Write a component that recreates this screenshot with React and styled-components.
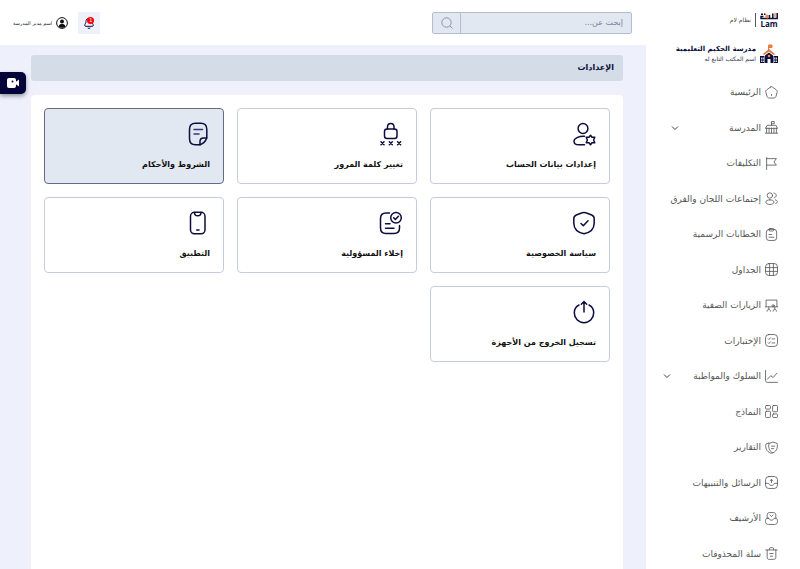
import React from "react";
import styled, { createGlobalStyle } from "styled-components";

const NAVY = "#0b0d3b";

const icons = {
  home: (
    <>
      <path d="M10.2 1.9 3 7.3C1.6 8.4 1.1 10 1.6 11.700l2.100 7.500c.6 2 1.900 3 3.900 3h8.800c2 0 3.300-1 3.900-3l2.100-7.500c.5-1.700 0-3.300-1.400-4.400l-7.200-5.400c-1.100-.8-2.500-.8-3.600 0Z" />
      <path d="M12 15.500v2" />
    </>
  ),
  school: (
    <>
      <path d="M12 8V1h5v4h-5M1 13l3-5h16l3 5ZM3 13v9M21 13v9M0 22.500h24M7.500 13v9M12 13v9M16.500 13v9" />
    </>
  ),
  flag: <path d="M3 1v22M3 3h18l-4.500 6L21 15H3" />,
  users: (
    <>
      <circle cx="9" cy="6.500" r="5" />
      <path d="M9 14.500c-4.500 0-7.500 1.700-7.500 4.200S4.500 23 9 23s7.500-1.800 7.500-4.300-3-4.200-7.500-4.200ZM16.500 2c2.600.2 4.200 2 4.200 4.400 0 2.300-1.500 4.100-3.700 4.400M19 14.500c2.400.5 3.800 1.700 3.800 3.300 0 1.500-1 2.700-3 3.400" />
    </>
  ),
  clipboard: (
    <>
      <rect x="2.500" y="2.500" width="19" height="20.500" rx="5" />
      <rect x="7.500" y="1" width="9" height="4.500" rx="2" />
      <path d="M7.500 12h5M7.500 17h9" />
    </>
  ),
  grid: (
    <>
      <rect x="1" y="1" width="22" height="22" rx="6" />
      <path d="M1 8.500h22M1 15.500h22M8.500 1v22M15.500 1v22" />
    </>
  ),
  visits: (
    <>
      <path d="M2 14V2h20v12M0 14.500h24" />
      <circle cx="15" cy="12.500" r="2" />
      <path d="M7 15v4M4 22.500c0-2 1-3.500 3-3.500s3 1.500 3 3.500M18 15v4M15 22.500c0-2 1-3.500 3-3.500s3 1.500 3 3.500" />
    </>
  ),
  tests: (
    <>
      <rect x="1" y="1" width="22" height="22" rx="6" />
      <path d="M13 9h5M13 16.500h5M6 8.800l1.300 1.300L10 7M6 16.300l1.300 1.300 2.700-3.100" />
    </>
  ),
  chart: <path d="M1 1v18c0 2.500 1 3.800 3.500 3.800H23M4.500 17l6-6.500 4.500 3.500 7-8" />,
  forms: (
    <>
      <rect x="1" y="1" width="9" height="6.500" rx="1.500" />
      <rect x="1" y="11.500" width="9" height="11.500" rx="1.500" />
      <rect x="14" y="1" width="9" height="11.500" rx="1.500" />
      <rect x="14" y="16.500" width="9" height="6.500" rx="1.500" />
    </>
  ),
  reports: (
    <>
      <path d="M7.500 4.500 14.500 2l8 2.500c1 5 .5 14-8 17.500C7 18.500 5.500 10.500 7.500 4.500Z" />
      <path d="M6.500 3.500 1.500 6c-1 6 1 13.500 9 16.500l3-.5M12 9.500h6M12 14h4" />
    </>
  ),
  messages: (
    <>
      <rect x="1" y="1" width="22" height="22" rx="6" />
      <path d="M1 13.500h4.500c1 0 1.600.5 2 1.300l.7 1.200c.5.900 1 1.200 2 1.200h3.600c1 0 1.500-.3 2-1.200l.7-1.200c.4-.8 1-1.300 2-1.300H23M9.500 8.500 12 6.500l2.500 2M12 7v5" />
    </>
  ),
  archive: (
    <>
      <path d="M4 12V6c0-3.300 1.500-5 4.500-5h7c3 0 4.500 1.700 4.500 5v6" />
      <path d="M6 11.500c-3.300 0-5 1.500-5 4.500v1.500C1 21 2.700 23 6.500 23h11c3.800 0 5.500-2 5.500-5.500V16c0-3-1.700-4.500-5-4.500-1.500 0-2 1-3 2.500-1.500 1.500-4.500 1.500-6 0-1-1.500-1.500-2.500-3-2.500ZM9 5.500l3 3 3-3" />
    </>
  ),
  trash: (
    <path d="M1.500 5.500h21M8 5V3.500C8 2 8.800 1.200 10.300 1.200h3.400c1.500 0 2.300.8 2.300 2.300V5M4 5.500V19c0 2.500 1.200 3.800 3.700 3.800h8.600c2.500 0 3.700-1.300 3.700-3.800V5.500M9 12h6M10 17h4" />
  ),
  account: (
    <>
      <circle cx="11" cy="6.500" r="4.900" />
      <path d="M12.500 14.300c-6-.2-10.500 2-10.500 4.900 0 2.300 2 3.600 5 3.600h5.500" />
      <path d="m18.500 13.300 1.500 2h2.800l-1.200 2.700 1.200 2.700H20l-1.500 2-1.500-2h-2.800l1.200-2.700-1.200-2.700H17Z" />
    </>
  ),
  password: (
    <>
      <rect x="5.500" y="7" width="12.500" height="9.500" rx="2.500" />
      <path d="M8.500 7V5c0-2.100 1.200-3.500 3.300-3.500S15 2.900 15 5v2" />
      <path d="m2 19.800 3 3m0-3-3 3M10.300 19.800l3 3m0-3-3 3M18.600 19.800l3 3m0-3-3 3" />
    </>
  ),
  terms: (
    <>
      <path d="M14 22.800H9.500c-4 0-6-2-6-6V7.300c0-4 2-6 6-6h5.300c4 0 6 2 6 6v8.500c-1 3.200-3.800 6-6.800 7Z" />
      <path d="M14 22.800v-3.300c0-2.300 1.200-3.500 3.500-3.500h3.200" />
      <path d="M8 7.500h8.500M8 12h5" stroke="#34357a" />
    </>
  ),
  privacy: (
    <>
      <path d="M10.200 1.800 4.300 4C2.700 4.600 1.800 6 1.800 7.800V12c0 5.500 4 9.500 10.200 10.800 6.200-1.300 10.200-5.300 10.200-10.800V7.800c0-1.800-.9-3.200-2.500-3.800l-5.900-2.200c-1.200-.5-2.400-.5-3.600 0Z" />
      <path d="m9 12.500 2.300 2.300 4.700-5" />
    </>
  ),
  disclaimer: (
    <>
      <path d="M10.500 2H7C3.500 2 1.500 4 1.500 7.500V17c0 3.500 2 5.500 5.500 5.500h8c3.500 0 5.500-2 5.500-5.500v-2.500" />
      <circle cx="17" cy="6.800" r="5.300" />
      <path d="m14.800 6.900 1.600 1.600 3-3.200M6.500 12.800h4.500M6.500 17.200h8.500" />
    </>
  ),
  phone: (
    <>
      <rect x="4.500" y="1.300" width="14.500" height="21.500" rx="4" />
      <path d="M8.500 1.500c0 2.300 1 3.300 3.200 3.300s3.300-1 3.300-3.300M10.700 19h2.300" />
    </>
  ),
  logout: (
    <path d="M7 5C4 6.500 2.300 9.300 2.300 12.800c0 5.500 4.200 9.900 9.700 9.900s9.700-4.400 9.700-9.900c0-3.500-1.700-6.300-4.700-7.800M12 12V1.800M9.300 4.300 12 1.500l2.700 2.800" />
  ),
};

const menu = [
  { icon: "home", label: "الرئيسية" },
  { icon: "school", label: "المدرسة", arrowInset: 14 },
  { icon: "flag", label: "التكليفات" },
  { icon: "users", label: "إجتماعات اللجان والفرق" },
  { icon: "clipboard", label: "الخطابات الرسمية" },
  { icon: "grid", label: "الجداول" },
  { icon: "visits", label: "الزيارات الصفية" },
  { icon: "tests", label: "الإختبارات" },
  { icon: "chart", label: "السلوك والمواظبة", arrowInset: 6 },
  { icon: "forms", label: "النماذج" },
  { icon: "reports", label: "التقارير" },
  { icon: "messages", label: "الرسائل والتنبيهات" },
  { icon: "archive", label: "الأرشيف" },
  { icon: "trash", label: "سلة المحذوفات" },
];

const settings = [
  { icon: "account", label: "إعدادات بيانات الحساب" },
  { icon: "password", label: "تغيير كلمة المرور" },
  { icon: "terms", label: "الشروط والأحكام", active: true },
  { icon: "privacy", label: "سياسة الخصوصية" },
  { icon: "disclaimer", label: "إخلاء المسؤولية" },
  { icon: "phone", label: "التطبيق" },
  { icon: "logout", label: "تسجيل الخروج من الأجهزة" },
];

const Icon = ({ name, size, weight }) => (
  <LineIcon viewBox="0 0 24 24" $size={size} strokeWidth={weight} aria-hidden="true">
    {icons[name]}
  </LineIcon>
);

const Sidebar = () => (
  <SidebarWrapper>
    <Brand>
      <svg width="18" height="16" viewBox="0 0 18 16" role="img" aria-label="Lam">
        <path d="M17.200 1v5.500h-4.400V1.500M12.800 6.500H9.500V3M9.500 6.500H1V4.500h2.500" fill="none" stroke={NAVY} strokeWidth="1.500" />
        <circle cx="7.200" cy="4.500" r="1.900" fill="#e98a55" />
        <path d="M14 1h2v4h-2z" fill="#e9b093" />
        <path d="M1 1.500h2V3H1zM4 1.500h1.500V3H4z" fill={NAVY} />
        <text x="9" y="15" textAnchor="middle" fontFamily="Open Sans, sans-serif" fontWeight="700" fontSize="8" fill={NAVY} direction="ltr">
          Lam
        </text>
      </svg>
      <BrandName>نظام لام</BrandName>
    </Brand>
    <School>
      <svg width="18" height="20" viewBox="0 0 18 20" aria-hidden="true">
        <path d="M8.500 6V1h3.500v2.500H9" fill="#f08a4b" stroke="#e07a3c" />
        <path d="M9 5 3.500 9.500v2L9 7.500l5.500 4v-2Z" fill="#e07a3c" />
        <path d="M9 8.500 5 11.500V19h8v-7.500ZM0 12h4.500v7H0zM13.500 12H18v7h-4.500z" fill={NAVY} />
        <circle cx="9" cy="12" r="1.300" fill="#f08a4b" />
        <path d="M7.500 15h3v4h-3zM1.200 13.500h1v2h-1zM2.800 13.500h1v2h-1zM1.200 16.500h1v1.500h-1zM2.800 16.500h1v1.500h-1zM14.200 13.500h1v2h-1zM15.800 13.500h1v2h-1zM14.200 16.500h1v1.500h-1zM15.800 16.500h1v1.500h-1z" fill="#fff" />
      </svg>
      <div>
        <SchoolName>مدرسة الحكيم التعليمية</SchoolName>
        <Office>اسم المكتب التابع له</Office>
      </div>
    </School>
    <Menu>
      {menu.map((item) => (
        <li key={item.icon}>
          <MenuLink href="#" $inset={item.arrowInset}>
            <Icon name={item.icon} size={13} weight={1.5} />
            <span>{item.label}</span>
            {item.arrowInset && (
              <Chevron viewBox="0 0 8 8" aria-hidden="true">
                <path d="m1 2.500 3 3 3-3" />
              </Chevron>
            )}
          </MenuLink>
        </li>
      ))}
    </Menu>
  </SidebarWrapper>
);

const Topbar = () => (
  <TopbarWrapper>
    <Search>
      <SearchInput type="text" placeholder="إبحث عن..." aria-label="إبحث عن" />
      <SearchButton type="button" aria-label="بحث">
        <svg width="12" height="12" viewBox="0 0 12 12" fill="none" stroke="#8d93a5" aria-hidden="true">
          <circle cx="5.500" cy="5.500" r="4.700" />
          <path d="m9 9 2.500 2.500" />
        </svg>
      </SearchButton>
    </Search>
    <UserArea>
      <BellButton type="button" aria-label="التنبيهات">
        <svg width="10" height="12" viewBox="0 0 10 12" fill="none" stroke={NAVY} aria-hidden="true">
          <path d="M5 1.200C3 1.200 2 2.700 2 4.500c0 2-1.300 2.700-1.300 3.800 0 .8.600 1 1.300 1h6c.7 0 1.300-.2 1.300-1C9.300 7.200 8 6.500 8 4.500 8 2.700 7 1.200 5 1.200ZM3.700 11c.7.5 1.900.5 2.600 0" />
        </svg>
        <Badge>1</Badge>
      </BellButton>
      <User type="button">
        <svg width="12" height="12" viewBox="0 0 12 12" aria-hidden="true">
          <circle cx="6" cy="6" r="5.400" fill="none" stroke="#111" />
          <circle cx="6" cy="4.500" r="2" fill="#111" />
          <path d="M2.500 9.500c.5-2 2-2.500 3.500-2.500s3 .5 3.500 2.500C8 11.300 4 11.300 2.500 9.500Z" fill="#111" />
        </svg>
        <span>اسم مدير المدرسة</span>
      </User>
    </UserArea>
  </TopbarWrapper>
);

const App = () => (
  <Page dir="rtl">
    <GlobalStyle />
    <Sidebar />
    <Main>
      <Topbar />
      <Content>
        <PageTitle>الإعدادات</PageTitle>
        <Panel>
          {settings.map((item) => (
            <Card key={item.icon} type="button" $active={item.active}>
              <Icon name={item.icon} size={24} weight={1.5} />
              <span>{item.label}</span>
            </Card>
          ))}
        </Panel>
      </Content>
    </Main>
    <CameraTab type="button" aria-label="فيديو">
      <svg width="12" height="10" viewBox="0 0 12 10" aria-hidden="true">
        <rect width="9" height="10" rx="2" fill="#fff" />
        <path d="m8.500 4 3.500-2.500v7L8.500 6Z" fill="#fff" />
        <circle cx="5.500" cy="3.500" r="1" fill={NAVY} />
      </svg>
    </CameraTab>
  </Page>
);

export default App;

const GlobalStyle = createGlobalStyle`
  * {
    box-sizing: border-box;
  }

  body {
    margin: 0;
    background: #eef1fb;
    font-family: "DejaVu Sans", sans-serif;
  }

  button,
  input {
    font-family: inherit;
  }
`;

const Page = styled.div`
  display: flex;
  min-height: 100vh;
`;

const SidebarWrapper = styled.aside`
  display: flex;
  flex-direction: column;
  flex: 0 0 154px;
  padding: 12px 22px 3px 0;
  background: #fff;
`;

const Brand = styled.div`
  display: flex;
  align-items: center;
  gap: 4px;
  height: 16px;
`;

const BrandName = styled.span`
  padding-right: 4px;
  border-right: 1px solid #555a70;
  font-size: 6px;
  line-height: 14px;
  color: #444;
`;

const School = styled.div`
  display: flex;
  align-items: center;
  gap: 4px;
  margin-top: 16px;
  white-space: nowrap;
`;

const SchoolName = styled.div`
  font-size: 7px;
  font-weight: 700;
  line-height: 10px;
  color: ${NAVY};
`;

const Office = styled.div`
  font-size: 6px;
  line-height: 10px;
  color: #33364f;
`;

const Menu = styled.ul`
  display: flex;
  flex-direction: column;
  flex: 1;
  justify-content: space-between;
  margin: 16px 0 0;
  padding: 0;
  list-style: none;
`;

const MenuLink = styled.a`
  display: flex;
  align-items: center;
  gap: 4px;
  height: 24px;
  padding-left: ${({ $inset }) => $inset || 0}px;
  font-size: 9px;
  color: #555;
  text-decoration: none;
  white-space: nowrap;
`;

const LineIcon = styled.svg`
  flex: none;
  width: ${({ $size }) => $size}px;
  height: ${({ $size }) => $size}px;
  fill: none;
  stroke: currentColor;
  stroke-linecap: round;
  stroke-linejoin: round;
`;

const Chevron = styled.svg`
  width: 8px;
  height: 8px;
  margin-right: auto;
  margin-left: 11px;
  fill: none;
  stroke: #444;
`;

const Main = styled.div`
  display: flex;
  flex-direction: column;
  flex: 1;
  min-width: 0;
`;

const TopbarWrapper = styled.header`
  display: flex;
  align-items: center;
  justify-content: space-between;
  height: 45px;
  padding: 0 14px 0 13px;
  background: #fff;
`;

const Search = styled.div`
  display: flex;
  width: 200px;
  height: 22px;
  border: 1px solid #b6bdd3;
  border-radius: 2px;
  background: #e2e8f2;
`;

const SearchInput = styled.input`
  flex: 1;
  min-width: 0;
  padding: 0 8px;
  border: 0;
  background: none;
  font-size: 8px;
  color: #333;

  &::placeholder {
    color: #7b8190;
    opacity: 1;
  }
`;

const SearchButton = styled.button`
  display: grid;
  place-items: center;
  width: 28px;
  padding: 0;
  border: 0;
  border-right: 1px solid #b6bdd3;
  background: none;
`;

const UserArea = styled.div`
  display: flex;
  align-items: center;
  gap: 10px;
`;

const BellButton = styled.button`
  position: relative;
  display: grid;
  place-items: center;
  width: 22px;
  height: 22px;
  padding: 0;
  border: 0;
  background: #eef1fb;
`;

const Badge = styled.span`
  position: absolute;
  top: 5px;
  right: 6px;
  width: 7px;
  height: 7px;
  border-radius: 50%;
  background: #f00;
  font-size: 5px;
  line-height: 7px;
  text-align: center;
  color: #fff;
`;

const User = styled.button`
  display: flex;
  align-items: center;
  gap: 4px;
  padding: 0;
  border: 0;
  background: none;
  font-size: 5px;
  color: #222;
`;

const Content = styled.main`
  display: flex;
  flex-direction: column;
  flex: 1;
  gap: 14px;
  padding: 10px 23px 0 31px;
`;

const PageTitle = styled.h1`
  margin: 0;
  padding: 0 9px;
  border-radius: 3px;
  background: #d4dde7;
  font-size: 8px;
  font-weight: 700;
  line-height: 26px;
  color: ${NAVY};
`;

const Panel = styled.section`
  display: grid;
  grid-template-columns: repeat(3, 1fr);
  align-content: start;
  flex: 1;
  gap: 13px;
  padding: 13px;
  border-radius: 4px 4px 0 0;
  background: #fff;
`;

const Card = styled.button`
  display: flex;
  flex-direction: column;
  align-items: flex-start;
  gap: 10px;
  padding: 13px 13px 9px;
  border: 1px solid ${({ $active }) => ($active ? "#666b85" : "#c6cbe0")};
  border-radius: 4px;
  background: ${({ $active }) => ($active ? "#e2e8f1" : "#fff")};
  font-size: 8px;
  font-weight: 700;
  line-height: 18px;
  color: #111;

  svg {
    color: ${NAVY};
  }
`;

const CameraTab = styled.button`
  position: fixed;
  top: 72px;
  left: 0;
  display: grid;
  place-items: center;
  width: 26px;
  height: 22px;
  padding: 0;
  border: 0;
  border-radius: 0 5px 5px 0;
  background: #02043a;
  box-shadow: 0 2px 4px rgba(0, 0, 0, 0.4);
`;
